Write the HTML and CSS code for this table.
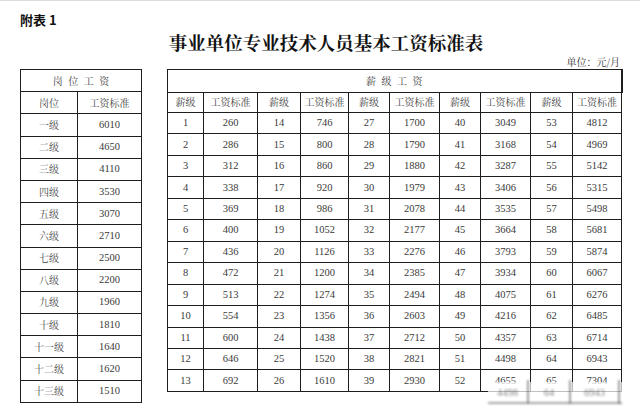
FILE: index.html
```html
<!DOCTYPE html>
<html lang="zh-CN">
<head>
<meta charset="utf-8">
<title>事业单位专业技术人员基本工资标准表</title>
<link rel="stylesheet" href="styles.css">
</head>
<body>
<div class="page">
  <div class="caption">附表 1</div>
  <h1 class="title">事业单位专业技术人员基本工资标准表</h1>
  <div class="unit">单位：元/月</div>
  <div class="tables">
    <table class="post">
      <colgroup><col class="c57"><col class="c64"></colgroup>
      <tr><th colspan="2" class="spaced">岗 位 工 资</th></tr>
      <tr><th>岗位</th><th>工资标准</th></tr>
      <tr><td>一级</td><td>6010</td></tr>
      <tr><td>二级</td><td>4650</td></tr>
      <tr><td>三级</td><td>4110</td></tr>
      <tr><td>四级</td><td>3530</td></tr>
      <tr><td>五级</td><td>3070</td></tr>
      <tr><td>六级</td><td>2710</td></tr>
      <tr><td>七级</td><td>2500</td></tr>
      <tr><td>八级</td><td>2200</td></tr>
      <tr><td>九级</td><td>1960</td></tr>
      <tr><td>十级</td><td>1810</td></tr>
      <tr><td>十一级</td><td>1640</td></tr>
      <tr><td>十二级</td><td>1620</td></tr>
      <tr><td>十三级</td><td>1510</td></tr>
    </table>
    <table class="scale">
      <colgroup>
        <col class="w36"><col class="w54"><col class="w43"><col class="w48"><col class="w41">
        <col class="w50"><col class="w41"><col class="w50"><col class="w42"><col class="w49">
      </colgroup>
      <tr class="top"><th colspan="10" class="spaced">薪 级 工 资</th></tr>
      <tr class="sub"><th>薪级</th><th>工资标准</th><th>薪级</th><th>工资标准</th><th>薪级</th><th>工资标准</th><th>薪级</th><th>工资标准</th><th>薪级</th><th>工资标准</th></tr>
      <tr><td>1</td><td>260</td><td>14</td><td>746</td><td>27</td><td>1700</td><td>40</td><td>3049</td><td>53</td><td>4812</td></tr>
      <tr><td>2</td><td>286</td><td>15</td><td>800</td><td>28</td><td>1790</td><td>41</td><td>3168</td><td>54</td><td>4969</td></tr>
      <tr><td>3</td><td>312</td><td>16</td><td>860</td><td>29</td><td>1880</td><td>42</td><td>3287</td><td>55</td><td>5142</td></tr>
      <tr><td>4</td><td>338</td><td>17</td><td>920</td><td>30</td><td>1979</td><td>43</td><td>3406</td><td>56</td><td>5315</td></tr>
      <tr><td>5</td><td>369</td><td>18</td><td>986</td><td>31</td><td>2078</td><td>44</td><td>3535</td><td>57</td><td>5498</td></tr>
      <tr><td>6</td><td>400</td><td>19</td><td>1052</td><td>32</td><td>2177</td><td>45</td><td>3664</td><td>58</td><td>5681</td></tr>
      <tr><td>7</td><td>436</td><td>20</td><td>1126</td><td>33</td><td>2276</td><td>46</td><td>3793</td><td>59</td><td>5874</td></tr>
      <tr><td>8</td><td>472</td><td>21</td><td>1200</td><td>34</td><td>2385</td><td>47</td><td>3934</td><td>60</td><td>6067</td></tr>
      <tr><td>9</td><td>513</td><td>22</td><td>1274</td><td>35</td><td>2494</td><td>48</td><td>4075</td><td>61</td><td>6276</td></tr>
      <tr><td>10</td><td>554</td><td>23</td><td>1356</td><td>36</td><td>2603</td><td>49</td><td>4216</td><td>62</td><td>6485</td></tr>
      <tr><td>11</td><td>600</td><td>24</td><td>1438</td><td>37</td><td>2712</td><td>50</td><td>4357</td><td>63</td><td>6714</td></tr>
      <tr><td>12</td><td>646</td><td>25</td><td>1520</td><td>38</td><td>2821</td><td>51</td><td>4498</td><td>64</td><td>6943</td></tr>
      <tr><td>13</td><td>692</td><td>26</td><td>1610</td><td>39</td><td>2930</td><td>52</td><td>4655</td><td>65</td><td>7304</td></tr>
    </table>
  </div>
  <div class="ghost" aria-hidden="true">
    <div class="ghost-row">
      <span class="g41">4498</span><span class="g42">64</span><span class="g49">6943</span>
    </div>
  </div>
</div>
</body>
</html>
```

FILE: styles.css
```css
html, body {
  margin: 0;
  padding: 0;
  background: #fff;
}

.page {
  position: relative;
  width: 640px;
  height: 418px;
  box-sizing: border-box;
  border-top: 1px solid #dcdcdc;
  padding: 12px 19px 0 20px;
  overflow: hidden;
  color: #222;
  font-family: "Liberation Serif", "Noto Serif CJK SC", "Noto Sans CJK SC", serif;
}

.caption {
  font-family: "Noto Sans CJK SC", "Noto Sans", sans-serif;
  font-weight: 700;
  font-size: 13px;
  line-height: 14px;
  height: 14px;
  color: #111;
}

.title {
  margin: 3px 0 0 0;
  padding-left: 11px;
  text-align: center;
  font-family: "Noto Serif CJK SC", "Noto Sans CJK SC", serif;
  font-weight: 700;
  font-size: 18.5px;
  line-height: 24px;
  color: #111;
}

.unit {
  margin-top: 2px;
  text-align: right;
  font-family: "Noto Serif CJK SC", "Noto Sans CJK SC", serif;
  font-size: 10px;
  line-height: 12px;
  color: #333;
  padding-right: 1px;
}

.tables {
  display: flex;
  align-items: flex-start;
  gap: 25px;
  margin-top: 1px;
}

table {
  border-collapse: collapse;
  table-layout: fixed;
}

th, td {
  border: 1px solid #1e1e1e;
  padding: 0;
  text-align: center;
  vertical-align: middle;
  font-weight: 400;
  font-size: 10px;
  line-height: 12px;
  color: #3a3a3a;
  overflow: hidden;
  white-space: nowrap;
}

th {
  font-family: "Noto Serif CJK SC", "Noto Sans CJK SC", serif;
  color: #444;
}

td {
  font-family: "Liberation Serif", "Noto Serif CJK SC", "Noto Sans CJK SC", serif;
  font-size: 10.5px;
}

.spaced {
  letter-spacing: 0;
  word-spacing: 3px;
}

/* left table */
.post {
  width: 121px;
  border: 1.5px solid #1e1e1e;
}
.post .c57 { width: 57px; }
.post .c64 { width: 64px; }
.post tr { height: 22.2px; }
.post td:first-child {
  font-family: "Noto Serif CJK SC", "Noto Sans CJK SC", serif;
  font-size: 10px;
  color: #4a4a4a;
}

/* right table */
.scale {
  width: 455px;
  border: 1.5px solid #1e1e1e;
}
.scale .w36 { width: 36px; }
.scale .w54 { width: 54px; }
.scale .w43 { width: 43px; }
.scale .w48 { width: 48px; }
.scale .w41 { width: 41px; }
.scale .w50 { width: 50px; }
.scale .w42 { width: 42px; }
.scale .w49 { width: 49px; }
.scale tr { height: 21.46px; }
.scale tr.top { height: 22.5px; }
.scale tr.top th { border-right-width: 2px; }
.scale tr.sub { height: 20.5px; }

/* blurred ghost strip over the bottom right corner */
.ghost {
  position: absolute;
  left: 488px;
  top: 381px;
  width: 134px;
  height: 25px;
  background: rgba(255, 255, 255, 0.72);
}
.ghost-row {
  display: flex;
  height: 20px;
  border-bottom: 2px solid rgba(40, 40, 40, 0.55);
  filter: blur(1.1px);
  opacity: 0.75;
}
.ghost-row span {
  display: flex;
  align-items: center;
  justify-content: center;
  font-size: 10.5px;
  color: #555;
  border-right: 2px solid rgba(40, 40, 40, 0.6);
  box-sizing: border-box;
  height: 24px;
  margin-top: -2px;
}
.g41 { width: 41px; }
.g42 { width: 42px; }
.g49 { width: 49px; }
```
